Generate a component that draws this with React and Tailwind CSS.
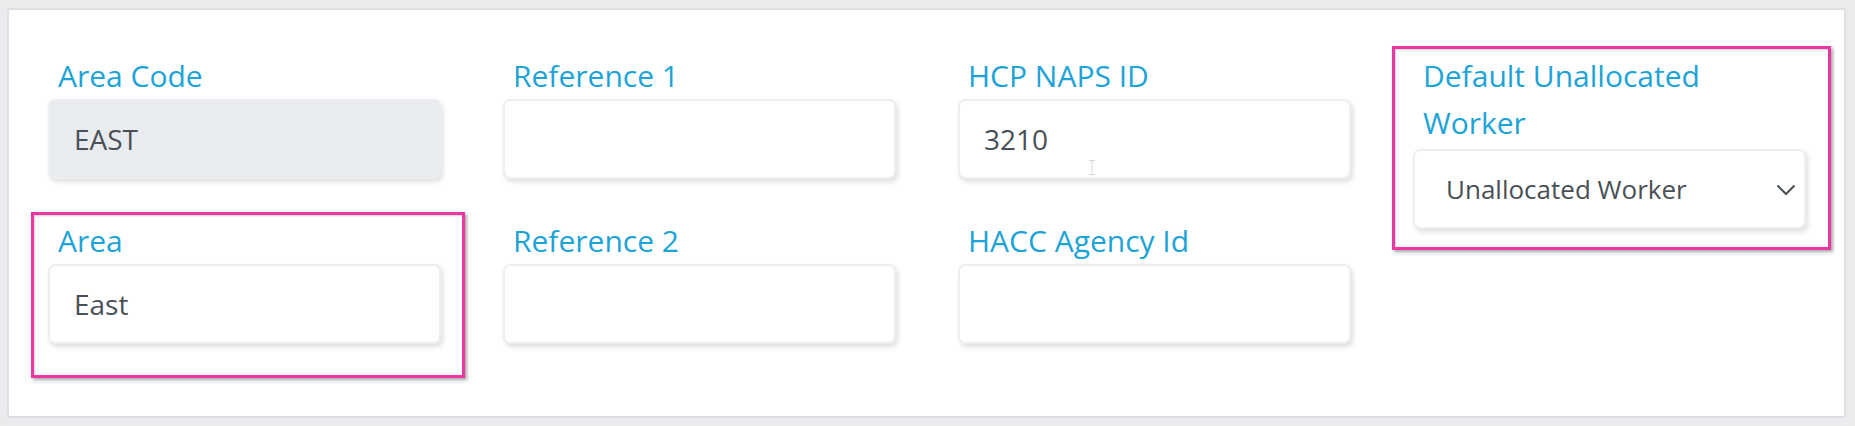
const font = { fontFamily: '"Open Sans", "Noto Sans", sans-serif' }

function Label({ children, className = '' }) {
  return <div className={`text-[30px] leading-[47px] text-[#1ca3d7] px-[10px] ${className}`}>{children}</div>
}

function Box({ value, disabled }) {
  return (
    <div
      className={`h-[80px] rounded-[7px] border-2 border-[#eceef2] shadow-[2px_3px_5px_rgba(0,0,0,0.13)] flex items-center px-[24px] text-[28px] text-[#495057] ${
        disabled ? 'bg-[#e9ecef]' : 'bg-white'
      }`}
    >
      {value}
    </div>
  )
}

function Highlight({ className }) {
  return (
    <div
      className={`absolute border-[3px] border-[#ea37a4] shadow-[2px_2px_3px_rgba(0,0,0,0.35),inset_1px_1px_2px_rgba(0,0,0,0.18)] pointer-events-none ${className}`}
    />
  )
}

export default function App() {
  return (
    <div className="w-[1855px] h-[426px] bg-[#eaebed] pt-[8px] pl-[7px] pr-[9px]" style={font}>
      <div className="h-[410px] bg-white border-2 border-[#dedfe2] rounded-[3px] pt-[42px] pl-[39px] flex gap-x-[62px]">
        {/* Column 1 */}
        <div className="w-[393px] flex flex-col gap-y-[38px]">
          <div>
            <Label>Area Code</Label>
            <Box value="EAST" disabled />
          </div>
          <div className="relative">
            <Highlight className="-left-[17px] -right-[24px] -top-[5px] -bottom-[34px]" />
            <Label>Area</Label>
            <Box value="East" />
          </div>
        </div>

        {/* Column 2 */}
        <div className="w-[393px] flex flex-col gap-y-[38px]">
          <div>
            <Label>Reference 1</Label>
            <Box />
          </div>
          <div>
            <Label>Reference 2</Label>
            <Box />
          </div>
        </div>

        {/* Column 3 */}
        <div className="w-[393px] flex flex-col gap-y-[38px]">
          <div className="relative">
            <Label>HCP NAPS ID</Label>
            <Box value="3210" />
            {/* text cursor */}
            <svg className="absolute left-[130px] top-[108px]" width="8" height="15" viewBox="0 0 8 15">
              <path d="M1 0.5h6M4 0.5v14M1 14.5h6" stroke="#d6d7da" strokeWidth="1" fill="none" />
            </svg>
          </div>
          <div>
            <Label>HACC Agency Id</Label>
            <Box />
          </div>
        </div>

        {/* Column 4 */}
        <div className="w-[393px]">
          <div className="relative">
            <Highlight className="-left-[21px] -right-[25px] -top-[6px] -bottom-[21px]" />
            <Label className="mb-[3px]">
              Default Unallocated
              <br />
              Worker
            </Label>
            <div className="h-[80px] rounded-[7px] border-2 border-[#eceef2] shadow-[2px_3px_5px_rgba(0,0,0,0.13)] bg-white flex items-center justify-between pl-[31px] pr-[8px] text-[26px] text-[#495057]">
              <span>Unallocated Worker</span>
              <svg width="20" height="12" viewBox="0 0 20 12" className="mt-[2px]">
                <path d="M1.5 1.5L10 10L18.5 1.5" stroke="#495057" strokeWidth="2" fill="none" />
              </svg>
            </div>
          </div>
        </div>
      </div>
    </div>
  )
}
